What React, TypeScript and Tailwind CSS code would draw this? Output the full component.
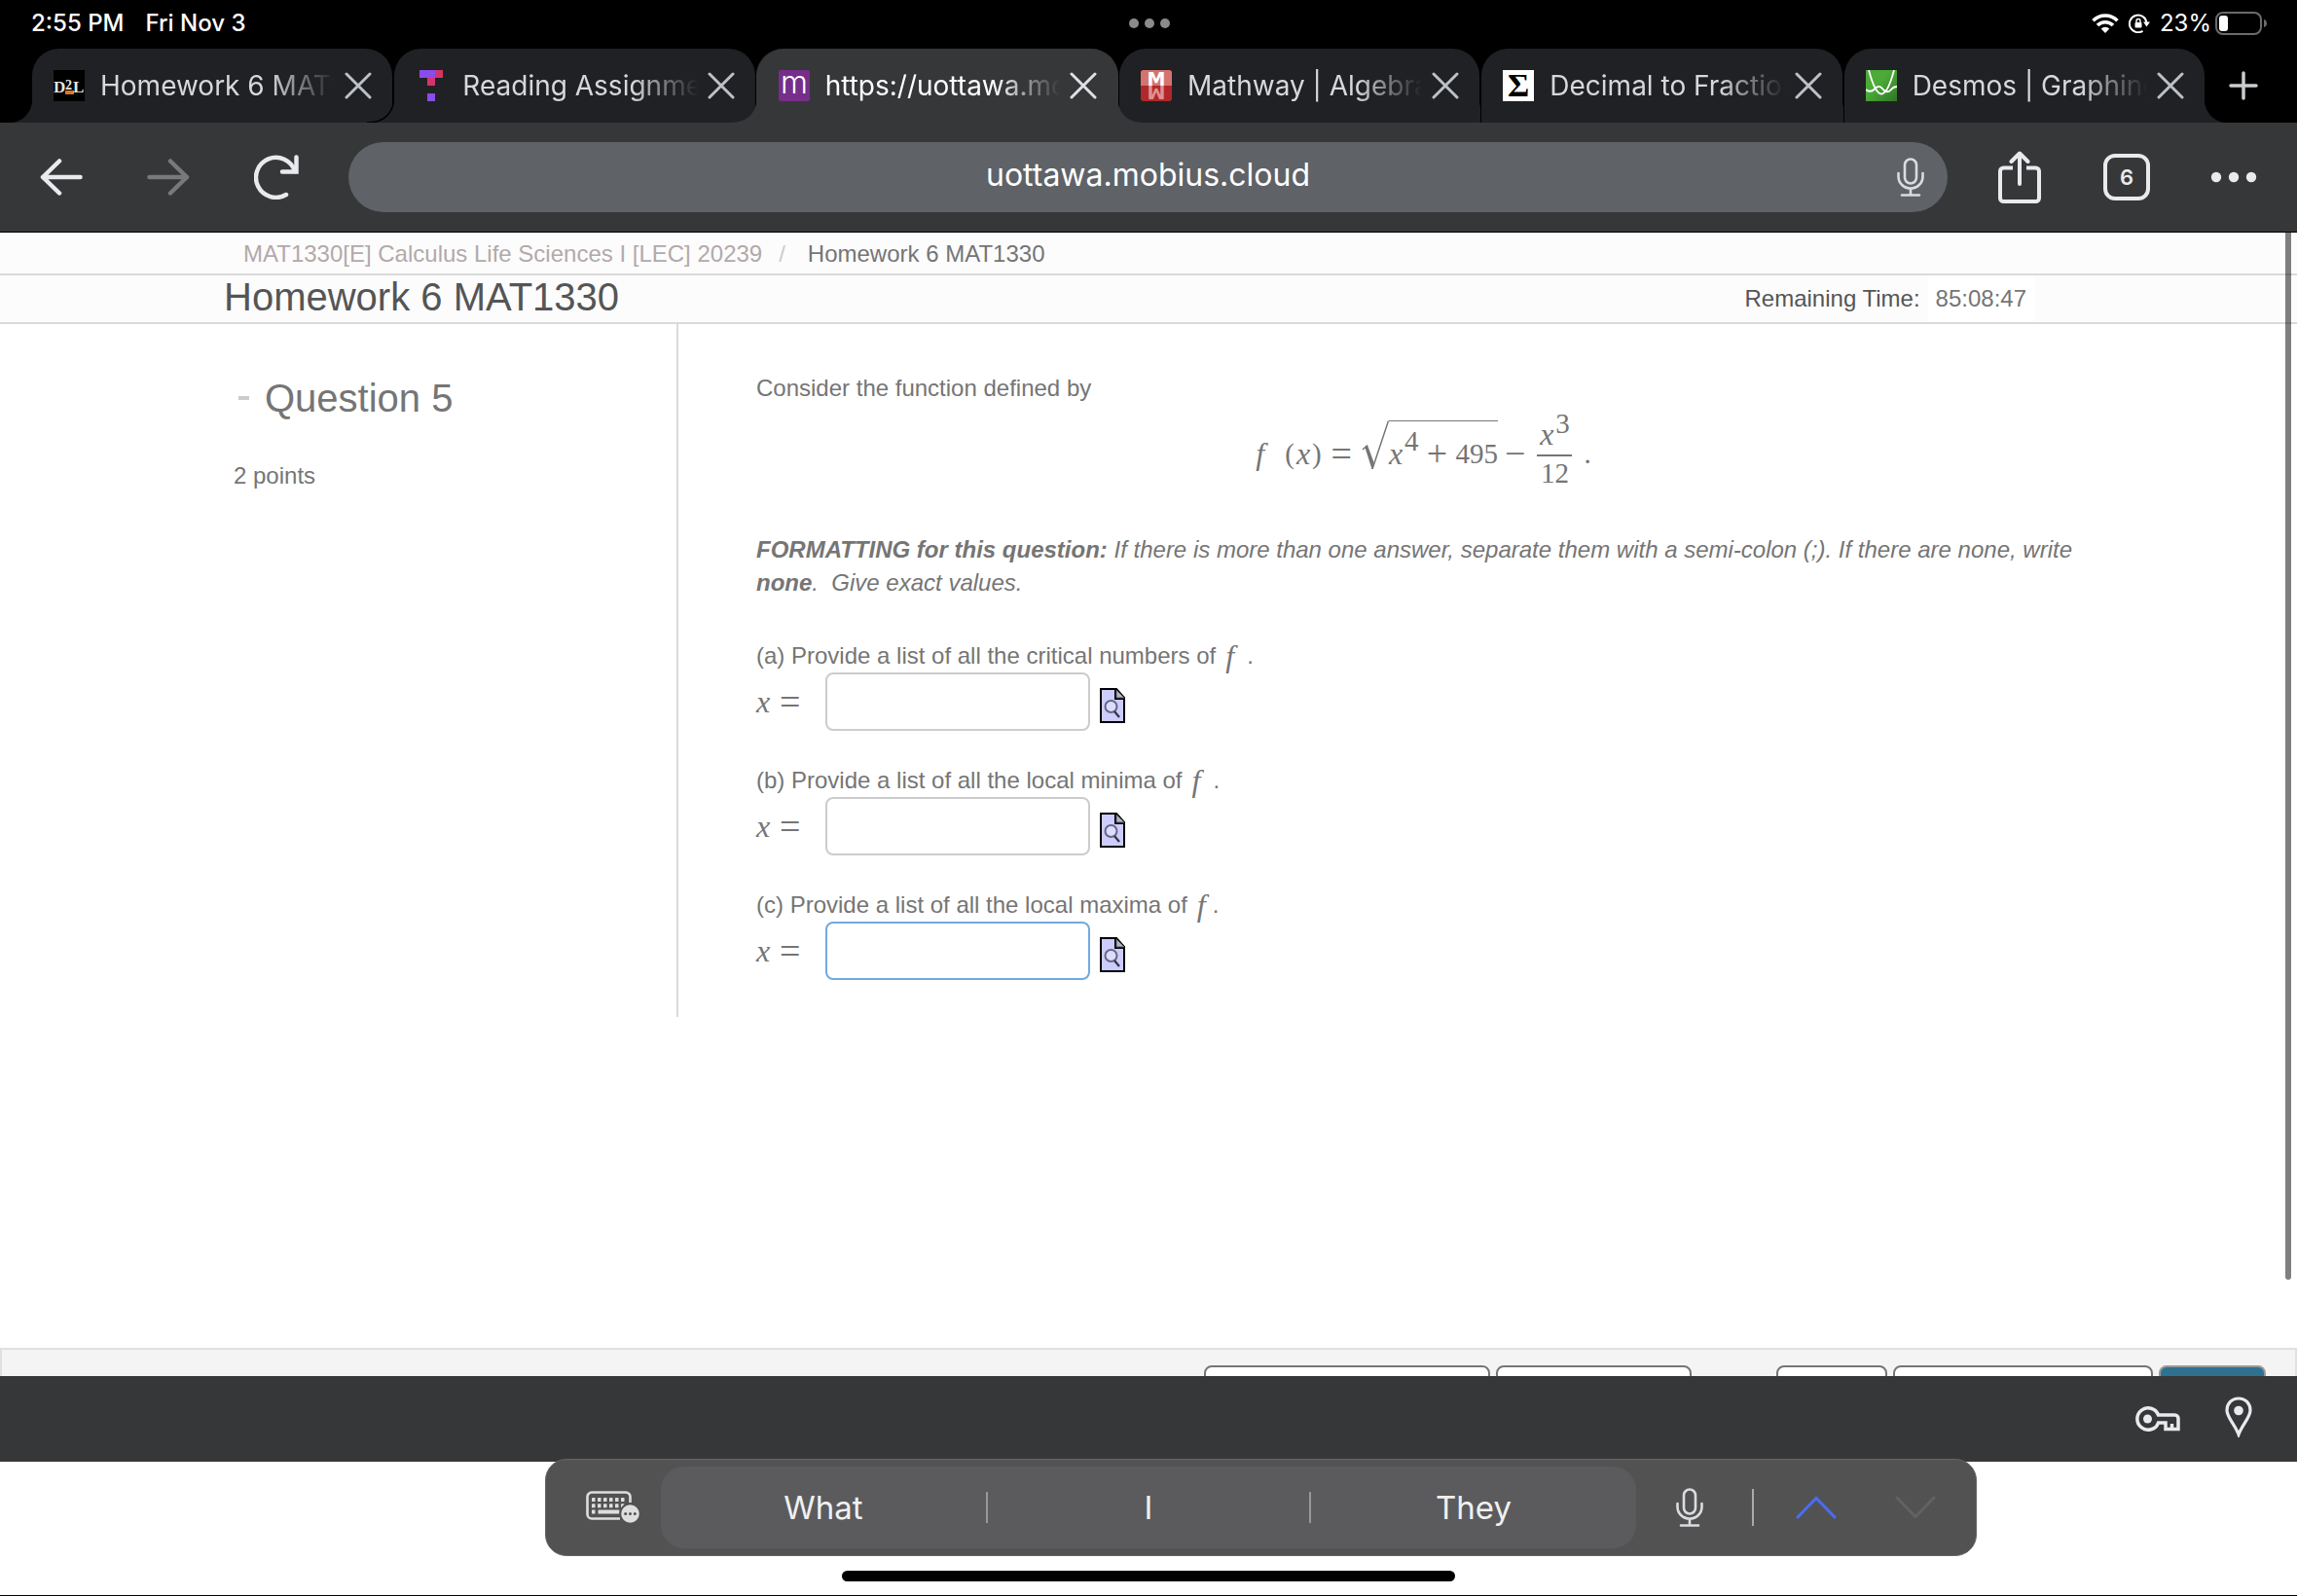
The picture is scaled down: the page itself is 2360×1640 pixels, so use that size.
import type { ReactNode } from 'react';
import clsx from 'clsx';

interface BrowserTab {
  title: string;
  icon: ReactNode;
  active?: boolean;
}

interface AnswerPart {
  id: string;
  text: string;
  spaced?: boolean;
  focused?: boolean;
}

const parts: AnswerPart[] = [
  {
    id: 'a',
    text: '(a) Provide a list of all the critical numbers of',
    spaced: true,
  },
  {
    id: 'b',
    text: '(b) Provide a list of all the local minima of',
    spaced: true,
  },
  {
    id: 'c',
    text: '(c) Provide a list of all the local maxima of',
    focused: true,
  },
];

function D2LIcon() {
  return (
    <svg viewBox="0 0 32 32" className="size-8">
      <rect width="32" height="32" fill="#000" />
      <rect x="12" y="21" width="9" height="4" fill="#d9772b" />
      <g
        fill="#e8e6e0"
        fontFamily="Liberation Serif, serif"
        fontWeight="700"
      >
        <text x="0" y="23" fontSize="17">
          D
        </text>
        <text x="12" y="20" fontSize="14">
          2
        </text>
        <text x="20" y="23" fontSize="17">
          L
        </text>
      </g>
    </svg>
  );
}

function TopHatIcon() {
  return (
    <svg viewBox="0 0 32 32" className="size-8">
      <path fill="#8a4ceb" d="M4 0h16v8H4zM12 24h8v8h-8z" />
      <path fill="#d6336c" d="M20 0h8v8h-8zM12 8h8v8h-8z" />
    </svg>
  );
}

function MobiusIcon() {
  return (
    <svg viewBox="0 0 32 32" className="size-8">
      <rect width="32" height="32" rx="2" fill="#762e8a" />
      <text
        x="16"
        y="24"
        textAnchor="middle"
        fontSize="32"
        fontFamily="Inter, sans-serif"
        fontWeight="300"
        fill="#fff"
      >
        m
      </text>
    </svg>
  );
}

function MathwayIcon() {
  return (
    <svg viewBox="0 0 32 32" className="size-8">
      <rect width="32" height="32" rx="3" fill="#b0282a" />
      <path d="M0 16V3a3 3 0 0 1 3-3h26a3 3 0 0 1 3 3v13z" fill="#d5736f" />
      <g
        fontSize="19"
        fontFamily="DejaVu Sans, sans-serif"
        fontWeight="700"
        textAnchor="middle"
      >
        <text x="16" y="-16" transform="scale(1 -1)" fill="#e0908e">
          M
        </text>
        <text x="16" y="16" fill="#fff">
          M
        </text>
      </g>
    </svg>
  );
}

function SigmaIcon() {
  return (
    <svg viewBox="0 0 32 32" className="size-8">
      <rect width="32" height="32" fill="#fff" />
      <text
        x="16"
        y="27"
        fontSize="34"
        fontFamily="Liberation Serif, serif"
        fontWeight="700"
        textAnchor="middle"
        fill="#000"
      >
        Σ
      </text>
    </svg>
  );
}

function DesmosIcon() {
  return (
    <svg viewBox="0 0 32 32" className="size-8">
      <defs>
        <linearGradient id="desmos" x1="0" y1="0" x2="1" y2="1">
          <stop offset="0.4" stopColor="#4cab38" />
          <stop offset="1" stopColor="#2f7526" />
        </linearGradient>
      </defs>
      <rect width="32" height="32" fill="url(#desmos)" />
      <g fill="none" stroke="#fff" strokeWidth="1.8">
        <path d="M3 0C7 15 11 24.500 16 24.500S25 15 29 0" />
        <path d="M0 20c3 2.500 6 2.500 9-.5 3-3.500 6-3.500 8-.5s6 5 9 1c2-2.500 4-3 6-3" />
      </g>
    </svg>
  );
}

const tabs: BrowserTab[] = [
  { title: 'Homework 6 MAT1330', icon: <D2LIcon /> },
  { title: 'Reading Assignment', icon: <TopHatIcon /> },
  { title: 'https://uottawa.mobius.cloud', icon: <MobiusIcon />, active: true },
  { title: 'Mathway | Algebra Problem', icon: <MathwayIcon /> },
  { title: 'Decimal to Fraction', icon: <SigmaIcon /> },
  { title: 'Desmos | Graphing Calculator', icon: <DesmosIcon /> },
];

const activeIndex = tabs.findIndex((tab) => tab.active);

// Curved foot that joins a tab to whatever stands beside it
function TabFoot({ side, active }: { side: 'left' | 'right'; active?: boolean }) {
  return (
    <svg
      viewBox="0 0 28 28"
      className={clsx(
        'absolute bottom-0 size-7',
        side === 'left' ? 'right-full' : 'left-full -scale-x-100',
        active ? 'text-[#363739]' : 'text-[#202124]'
      )}
    >
      <path d="M28 0C28 18 18 28 0 28H28Z" fill="currentColor" />
      {!active && (
        <path
          d="M28 0C28 18 18 28 0 28"
          fill="none"
          stroke="#000"
          strokeWidth="1.5"
        />
      )}
    </svg>
  );
}

function Tab({ tab, index }: { tab: BrowserTab; index: number }) {
  const { title, icon, active } = tab;
  return (
    <div
      className={clsx(
        'relative flex flex-1 min-w-0 items-center rounded-t-[28px] border-x pl-[22px] pr-[21px]',
        active
          ? 'z-10 border-[#363739] bg-[#363739] text-white'
          : 'border-black bg-[#202124] text-[#d6d8dc]'
      )}
    >
      {index <= activeIndex && <TabFoot side="left" active={active} />}
      {index >= activeIndex && <TabFoot side="right" active={active} />}
      <button type="button" className="flex flex-1 min-w-0 items-center gap-4">
        <span className="shrink-0">{icon}</span>
        <span className="flex-1 min-w-0 overflow-hidden whitespace-nowrap text-left text-[28px] leading-9 [mask-image:linear-gradient(to_right,#000_72%,transparent)]">
          {title}
        </span>
      </button>
      <button type="button" aria-label="Close tab" className="ml-[10px] shrink-0">
        <svg viewBox="0 0 28 28" className="size-7">
          <path
            d="M2 2l24 24M26 2L2 26"
            stroke={active ? '#dfe1e5' : '#bdc1c6'}
            strokeWidth="3"
            strokeLinecap="round"
          />
        </svg>
      </button>
    </div>
  );
}

function StatusBar() {
  return (
    <div className="grid grid-cols-3 items-center h-[50px] pl-8 pr-[30px] pb-[2px] text-2xl leading-9 font-medium text-white">
      <div className="flex gap-[22px]">
        <span>2:55 PM</span>
        <span>Fri Nov 3</span>
      </div>
      <svg viewBox="0 0 42 10" className="h-[10px] w-[42px] justify-self-center">
        <g fill="#8b8b8b">
          <circle cx="5" cy="5" r="5" />
          <circle cx="21" cy="5" r="5" />
          <circle cx="37" cy="5" r="5" />
        </g>
      </svg>
      <div className="flex items-center justify-end">
        <svg viewBox="0 0 28 20" className="w-7 h-5">
          <g fill="none" stroke="#fff" strokeWidth="3.600">
            <path d="M1.500 7.200a17.500 17.500 0 0 1 25 0" />
            <path d="M6 12a11.300 11.300 0 0 1 16 0" />
          </g>
          <path d="M9.700 15.500a6 6 0 0 1 8.600 0L14 20z" fill="#fff" />
        </svg>
        <svg viewBox="0 0 22 20" className="ml-[10px] w-[22px] h-5">
          <path
            d="M14.500 17.800A8.800 8.800 0 1 1 18.400 9"
            fill="none"
            stroke="#fff"
            strokeWidth="2"
          />
          <path d="M15 8.500h7l-3.500 5z" fill="#fff" />
          <rect x="6.500" y="9" width="7" height="5.500" rx="1" fill="#fff" />
          <path
            d="M8 9V7.500a2 2 0 0 1 4 0V9"
            fill="none"
            stroke="#fff"
            strokeWidth="1.400"
          />
        </svg>
        <span className="ml-[10px] font-normal">23%</span>
        <svg viewBox="0 0 54 24" className="ml-1 w-[54px] h-6">
          <rect
            x="1"
            y="1"
            width="46"
            height="22"
            rx="7"
            fill="none"
            stroke="#6b6b6b"
            strokeWidth="2"
          />
          <path d="M50 8c4 1 4 7 0 8z" fill="#6b6b6b" />
          <rect x="4" y="4" width="9" height="16" rx="3" fill="#fff" />
        </svg>
      </div>
    </div>
  );
}

function MicIcon({ className }: { className?: string }) {
  return (
    <svg viewBox="0 0 28 40" className={clsx('w-7 h-10', className)}>
      <g fill="none" stroke="#dadce0" strokeWidth="2.600" strokeLinecap="round">
        <rect x="8" y="1.500" width="12" height="25" rx="6" />
        <path d="M1.500 16v3.500a12.500 12 0 0 0 25 0V16M14 32v6.500M5 38.500h18" />
      </g>
    </svg>
  );
}

function Toolbar() {
  return (
    <div className="flex items-center h-[113px] pl-[41px] pr-[41px] bg-[#363739] border-b border-black">
      <button type="button" aria-label="Back">
        <svg viewBox="0 0 44 38" className="w-11 h-[38px]">
          <path
            d="M20 2.500L3 19l17 16.500M3 19h38.500"
            fill="none"
            stroke="#e8eaed"
            strokeWidth="4.500"
            strokeLinecap="round"
            strokeLinejoin="round"
          />
        </svg>
      </button>
      <button type="button" aria-label="Forward" className="ml-[66px]">
        <svg viewBox="0 0 44 38" className="w-11 h-[38px]">
          <path
            d="M24 2.500L41 19 24 35.500M41 19H2.500"
            fill="none"
            stroke="#78797b"
            strokeWidth="4.500"
            strokeLinecap="round"
            strokeLinejoin="round"
          />
        </svg>
      </button>
      <button type="button" aria-label="Reload" className="ml-[66px]">
        <svg viewBox="0 0 46 46" className="size-[46px]">
          <g
            fill="none"
            stroke="#e8eaed"
            strokeWidth="4.500"
            strokeLinecap="round"
          >
            <path d="M42 17A20.500 20.500 0 1 0 33 41" />
            <path d="M43.500 2.500V17.500H29" />
          </g>
        </svg>
      </button>
      <div className="ml-[51px] mr-[52px] flex flex-1 items-center h-[72px] rounded-full bg-[#5f6267] pl-[52px] pr-6">
        <input
          type="text"
          aria-label="Address"
          defaultValue="uottawa.mobius.cloud"
          className="flex-1 min-w-0 pb-1 bg-transparent text-center text-[32px] leading-10 text-white outline-none"
        />
        <button type="button" aria-label="Voice search">
          <MicIcon />
        </button>
      </div>
      <button type="button" aria-label="Share">
        <svg viewBox="0 0 44 54" className="w-11 h-[54px]">
          <g
            fill="none"
            stroke="#e8eaed"
            strokeWidth="4"
            strokeLinecap="round"
            strokeLinejoin="round"
          >
            <path
              d="M15 17.500H5.500a3.500 3.500 0 0 0-3.500 3.500v27.500a3.500 3.500 0 0 0 3.500 3.500h33a3.500 3.500 0 0 0 3.500-3.500V21a3.500 3.500 0 0 0-3.500-3.500H29"
              strokeLinecap="butt"
            />
            <path d="M22 34V3M13.500 11L22 2.500l8.500 8.500" />
          </g>
        </svg>
      </button>
      <button
        type="button"
        aria-label="Show 6 tabs"
        className="ml-16 flex items-center justify-center size-12 rounded-[12px] border-4 border-[#e8eaed] text-[22px] leading-6 font-semibold text-[#e8eaed]"
      >
        6
      </button>
      <button type="button" aria-label="More" className="ml-[62px]">
        <svg viewBox="0 0 48 12" className="w-12 h-3">
          <g fill="#e8eaed">
            <circle cx="6" cy="6" r="5.200" />
            <circle cx="24" cy="6" r="5.200" />
            <circle cx="42" cy="6" r="5.200" />
          </g>
        </svg>
      </button>
    </div>
  );
}

function MathVar({ children }: { children: ReactNode }) {
  return (
    <i className="w-4 font-['Liberation_Serif',serif] text-[32px] leading-[34px]">
      {children}
    </i>
  );
}

function MathOp({ children }: { children: ReactNode }) {
  return (
    <span className="font-['Liberation_Serif',serif] text-[38px] leading-[34px] text-center">
      {children}
    </span>
  );
}

function Formula() {
  return (
    <div className="flex items-center justify-center h-[86px] mt-[9px] mb-[37px] font-['Liberation_Serif',serif] text-[29px] leading-[34px]">
      <span className="flex items-center pb-[5px]">
        <MathVar>f</MathVar>
        <span className="ml-[14px] mr-[2px]">(</span>
        <MathVar>x</MathVar>
        <span className="mr-[10px]">)</span>
        <MathOp>=</MathOp>
      </span>
      <span className="ml-[10px] flex pb-[9px]">
        <svg viewBox="0 0 28 50" className="w-7 h-[50px]">
          <path
            d="M1 30l5-4.500M11 50L27.500 0.500"
            fill="none"
            stroke="currentColor"
            strokeWidth="1.500"
          />
          <path d="M3.500 28L6 25.500 12.500 43 11.500 50H10.500z" fill="currentColor" />
        </svg>
        <span className="flex items-center border-t border-current pt-[3px]">
          <MathVar>x</MathVar>
          <span className="pb-[26px]">4</span>
          <span className="flex w-[38px] justify-center">
            <MathOp>+</MathOp>
          </span>
          <span>495</span>
        </span>
      </span>
      <span className="ml-[7px] flex pb-[5px]">
        <MathOp>−</MathOp>
      </span>
      <span className="ml-3 flex flex-col items-center">
        <span className="flex items-center h-[42px]">
          <MathVar>x</MathVar>
          <span className="pb-[22px]">3</span>
        </span>
        <span className="w-9 h-[2px] bg-current" />
        <span className="h-[42px]">12</span>
      </span>
      <span className="ml-3 pb-[5px]">.</span>
    </div>
  );
}

function PreviewIcon() {
  return (
    <svg viewBox="0 0 26 36" className="w-[26px] h-9">
      <path d="M1 1h16l8 9v25H1z" fill="#ccccff" stroke="#000" strokeWidth="2" />
      <path d="M16 1v10h10" fill="#aaaacc" stroke="#000" strokeWidth="2" />
      <path d="M17 2l8 8h-8z" fill="#b4b4cc" stroke="#555" strokeWidth="1" />
      <circle
        cx="11.500"
        cy="19"
        r="6"
        fill="#dcdcff"
        stroke="#66667f"
        strokeWidth="2"
      />
      <path d="M15 24l5 6" stroke="#33333f" strokeWidth="2.200" />
    </svg>
  );
}

function Answer({ part }: { part: AnswerPart }) {
  return (
    <div className="mb-[34px] last:mb-0">
      <p className="flex items-center h-[34px]">
        <span className="mr-[10px]">{part.text}</span>
        <MathVar>f</MathVar>
        <span className={part.spaced ? 'ml-[6px]' : ''}>.</span>
      </p>
      <div className="flex items-center">
        <label
          htmlFor={`answer-${part.id}`}
          className="flex items-center gap-2 w-[71px]"
        >
          <MathVar>x</MathVar>
          <MathOp>=</MathOp>
        </label>
        <input
          id={`answer-${part.id}`}
          type="text"
          className={clsx(
            'w-[272px] h-[60px] rounded-lg border-2 bg-white px-3 outline-none',
            part.focused ? 'border-[#72a9e0]' : 'border-[#cccccc]'
          )}
        />
        <button type="button" aria-label="Preview" className="ml-[10px] pt-2">
          <PreviewIcon />
        </button>
      </div>
    </div>
  );
}

function Page() {
  return (
    <div className="relative flex flex-1 flex-col bg-white font-['Liberation_Sans',Arial,sans-serif] text-2xl leading-[34px] text-[#757575]">
      <nav className="flex items-center h-11 pt-[2px] pl-[250px] bg-[#fcfcfc] border-b-2 border-[#dadada]">
        <a href="#course" className="text-[#b3a9a9]">
          MAT1330[E] Calculus Life Sciences I [LEC] 20239
        </a>
        <span className="px-[17px] text-[#cccccc]">/</span>
        <span className="ml-[6px]">Homework 6 MAT1330</span>
      </nav>
      <header className="flex items-center justify-between h-[50px] pl-[230px] pr-[270px] bg-[#fcfcfc] border-b-2 border-[#dadada] text-[#555555]">
        <h1 className="pb-1 text-[40px] leading-10">Homework 6 MAT1330</h1>
        <p className="flex items-center">
          Remaining Time:
          <span className="ml-2 px-2 py-[7px] bg-white text-[#757575]">
            85:08:47
          </span>
        </p>
      </header>
      <main className="flex">
        <aside className="w-[697px] shrink-0 border-r-2 border-[#dadada] pl-[240px] pt-14">
          <h2 className="flex items-center text-[40px] leading-10">
            <span className="ml-[5px] mr-4 w-[11px] h-1 bg-[#cccccc]" />
            Question 5
          </h2>
          <p className="mt-[43px]">2 points</p>
        </aside>
        <section className="flex-1 pl-20 pr-[212px] pt-[49px] pb-[38px]">
          <p>Consider the function defined by</p>
          <Formula />
          <p className="italic mb-[41px]">
            <b>FORMATTING for this question:</b> If there is more than one
            answer, separate them with a semi-colon (;). If there are none,
            write <b>none</b>.&nbsp; Give exact values.
          </p>
          {parts.map((part) => (
            <Answer key={part.id} part={part} />
          ))}
        </section>
      </main>
      <div className="mt-auto flex items-start h-[29px] pl-[1235px] pr-[30px] pt-4 overflow-hidden bg-[#f4f4f4] border-2 border-b-0 border-[#e0e0e0]">
        <button
          type="button"
          aria-label="Question menu"
          className="w-[294px] h-12 rounded-lg border-2 border-[#757575] bg-white"
        />
        <button
          type="button"
          aria-label="How did I do"
          className="ml-[6px] w-[201px] h-12 rounded-lg border-2 border-[#757575] bg-white"
        />
        <button
          type="button"
          aria-label="Back"
          className="ml-auto w-[114px] h-12 rounded-lg border-2 border-[#757575] bg-white"
        />
        <button
          type="button"
          aria-label="Save and close"
          className="ml-[6px] w-[267px] h-12 rounded-lg border-2 border-[#757575] bg-white"
        />
        <button
          type="button"
          aria-label="Next"
          className="ml-[6px] w-[110px] h-12 rounded-lg border-2 border-[#999999] bg-[#2f7191]"
        />
      </div>
      <div className="absolute top-0 right-[6px] bottom-[99px] w-[6px] rounded-b-full bg-black/50" />
    </div>
  );
}

function AutofillBar() {
  return (
    <div className="flex items-center justify-end gap-[46px] h-[88px] pr-[46px] bg-[#363739]">
      <button type="button" aria-label="Passwords">
        <svg viewBox="0 0 46 26" className="w-[46px] h-[26px]">
          <g fill="none" stroke="#e8eaed" strokeWidth="3.500">
            <path d="M23.500 9A11.200 11.200 0 1 0 23.500 17H31v6.500h13V12.500a3.500 3.500 0 0 0-3.500-3.500z" />
            <path d="M37.500 24v-6" />
          </g>
          <circle cx="12.500" cy="13" r="4.500" fill="#e8eaed" />
        </svg>
      </button>
      <button type="button" aria-label="Addresses" className="pb-1">
        <svg viewBox="0 0 28 42" className="w-7 h-[42px]">
          <path
            d="M14 2C7 2 2 7.200 2 14.200 2 21.500 10.500 29 14 39c3.500-10 12-17.500 12-24.800C26 7.200 21 2 14 2z"
            fill="none"
            stroke="#e8eaed"
            strokeWidth="3.200"
          />
          <circle cx="14" cy="14.500" r="4.800" fill="#e8eaed" />
        </svg>
      </button>
    </div>
  );
}

function KeyboardIcon() {
  const columns = [0, 1, 2, 3, 4, 5];
  return (
    <svg viewBox="0 0 56 34" className="w-14 h-[34px]">
      <path
        d="M35 28.500H6A4.500 4.500 0 0 1 1.500 24V6A4.500 4.500 0 0 1 6 1.500h35A4.500 4.500 0 0 1 45.500 6v6"
        fill="none"
        stroke="#dedede"
        strokeWidth="2.600"
      />
      <g fill="#dedede">
        {columns.map((column) => (
          <rect
            key={column}
            x={6 + column * 6}
            y="7"
            width="3.500"
            height="4"
            rx="0.500"
          />
        ))}
        {columns.map((column) => (
          <rect
            key={column}
            x={6 + column * 6}
            y="13.200"
            width="3.500"
            height="4"
            rx="0.500"
          />
        ))}
        <rect x="6" y="19.400" width="3.500" height="4" rx="0.500" />
        <rect x="12.500" y="19.400" width="22" height="4" rx="0.500" />
      </g>
      <circle cx="45.500" cy="23.500" r="10.300" fill="#dedede" stroke="#525252" strokeWidth="2" />
      <g fill="#525252">
        <circle cx="40.700" cy="23.500" r="1.500" />
        <circle cx="45.500" cy="23.500" r="1.500" />
        <circle cx="50.300" cy="23.500" r="1.500" />
      </g>
    </svg>
  );
}

function KeyboardBar() {
  return (
    <div className="relative -mt-[3px] ml-auto mr-[329px] flex items-center w-[1471px] h-[100px] rounded-[22px] border border-[#666666] bg-[#525252] pl-[41px] pr-[41px] text-[33px] leading-10 text-[#f0f0f0]">
      <button type="button" aria-label="Keyboard options">
        <KeyboardIcon />
      </button>
      <div className="ml-[21px] grid flex-1 grid-cols-3 items-center h-[84px] rounded-[24px] bg-[#5b5b5d]">
        <button type="button">What</button>
        <button type="button" className="h-8 border-x-2 border-[#98989a]">
          <span className="block -my-1">I</span>
        </button>
        <button type="button">They</button>
      </div>
      <button type="button" aria-label="Dictate" className="ml-[41px]">
        <MicIcon />
      </button>
      <div className="ml-[50px] w-[2px] h-[38px] bg-[#aaaaac]" />
      <button type="button" aria-label="Previous field" className="ml-[43px]">
        <svg viewBox="0 0 42 24" className="w-[42px] h-6">
          <path
            d="M2 22L21 2.500 40 22"
            fill="none"
            stroke="#4a6cf5"
            strokeWidth="3"
            strokeLinecap="round"
          />
        </svg>
      </button>
      <button type="button" aria-label="Next field" className="ml-[60px]">
        <svg viewBox="0 0 42 24" className="w-[42px] h-6">
          <path
            d="M2 2L21 21.500 40 2"
            fill="none"
            stroke="#626262"
            strokeWidth="3"
            strokeLinecap="round"
          />
        </svg>
      </button>
    </div>
  );
}

export default function App() {
  return (
    <div className="flex flex-col min-h-screen bg-white border-b border-black font-['Inter',sans-serif]">
      <div className="bg-black">
        <StatusBar />
        <div className="flex items-stretch h-[76px] pl-8">
          {tabs.map((tab, index) => (
            <Tab key={tab.title} tab={tab} index={index} />
          ))}
          <button
            type="button"
            aria-label="New tab"
            className="shrink-0 w-[94px] pl-6"
          >
            <svg viewBox="0 0 30 30" className="size-[30px]">
              <path
                d="M15 2v26M2 15h26"
                stroke="#c9ccd0"
                strokeWidth="3.500"
                strokeLinecap="round"
              />
            </svg>
          </button>
        </div>
      </div>
      <Toolbar />
      <Page />
      <AutofillBar />
      <KeyboardBar />
      <div className="mt-[15px] mb-[14px] mx-auto w-[630px] h-[11px] rounded-full bg-black" />
    </div>
  );
}
